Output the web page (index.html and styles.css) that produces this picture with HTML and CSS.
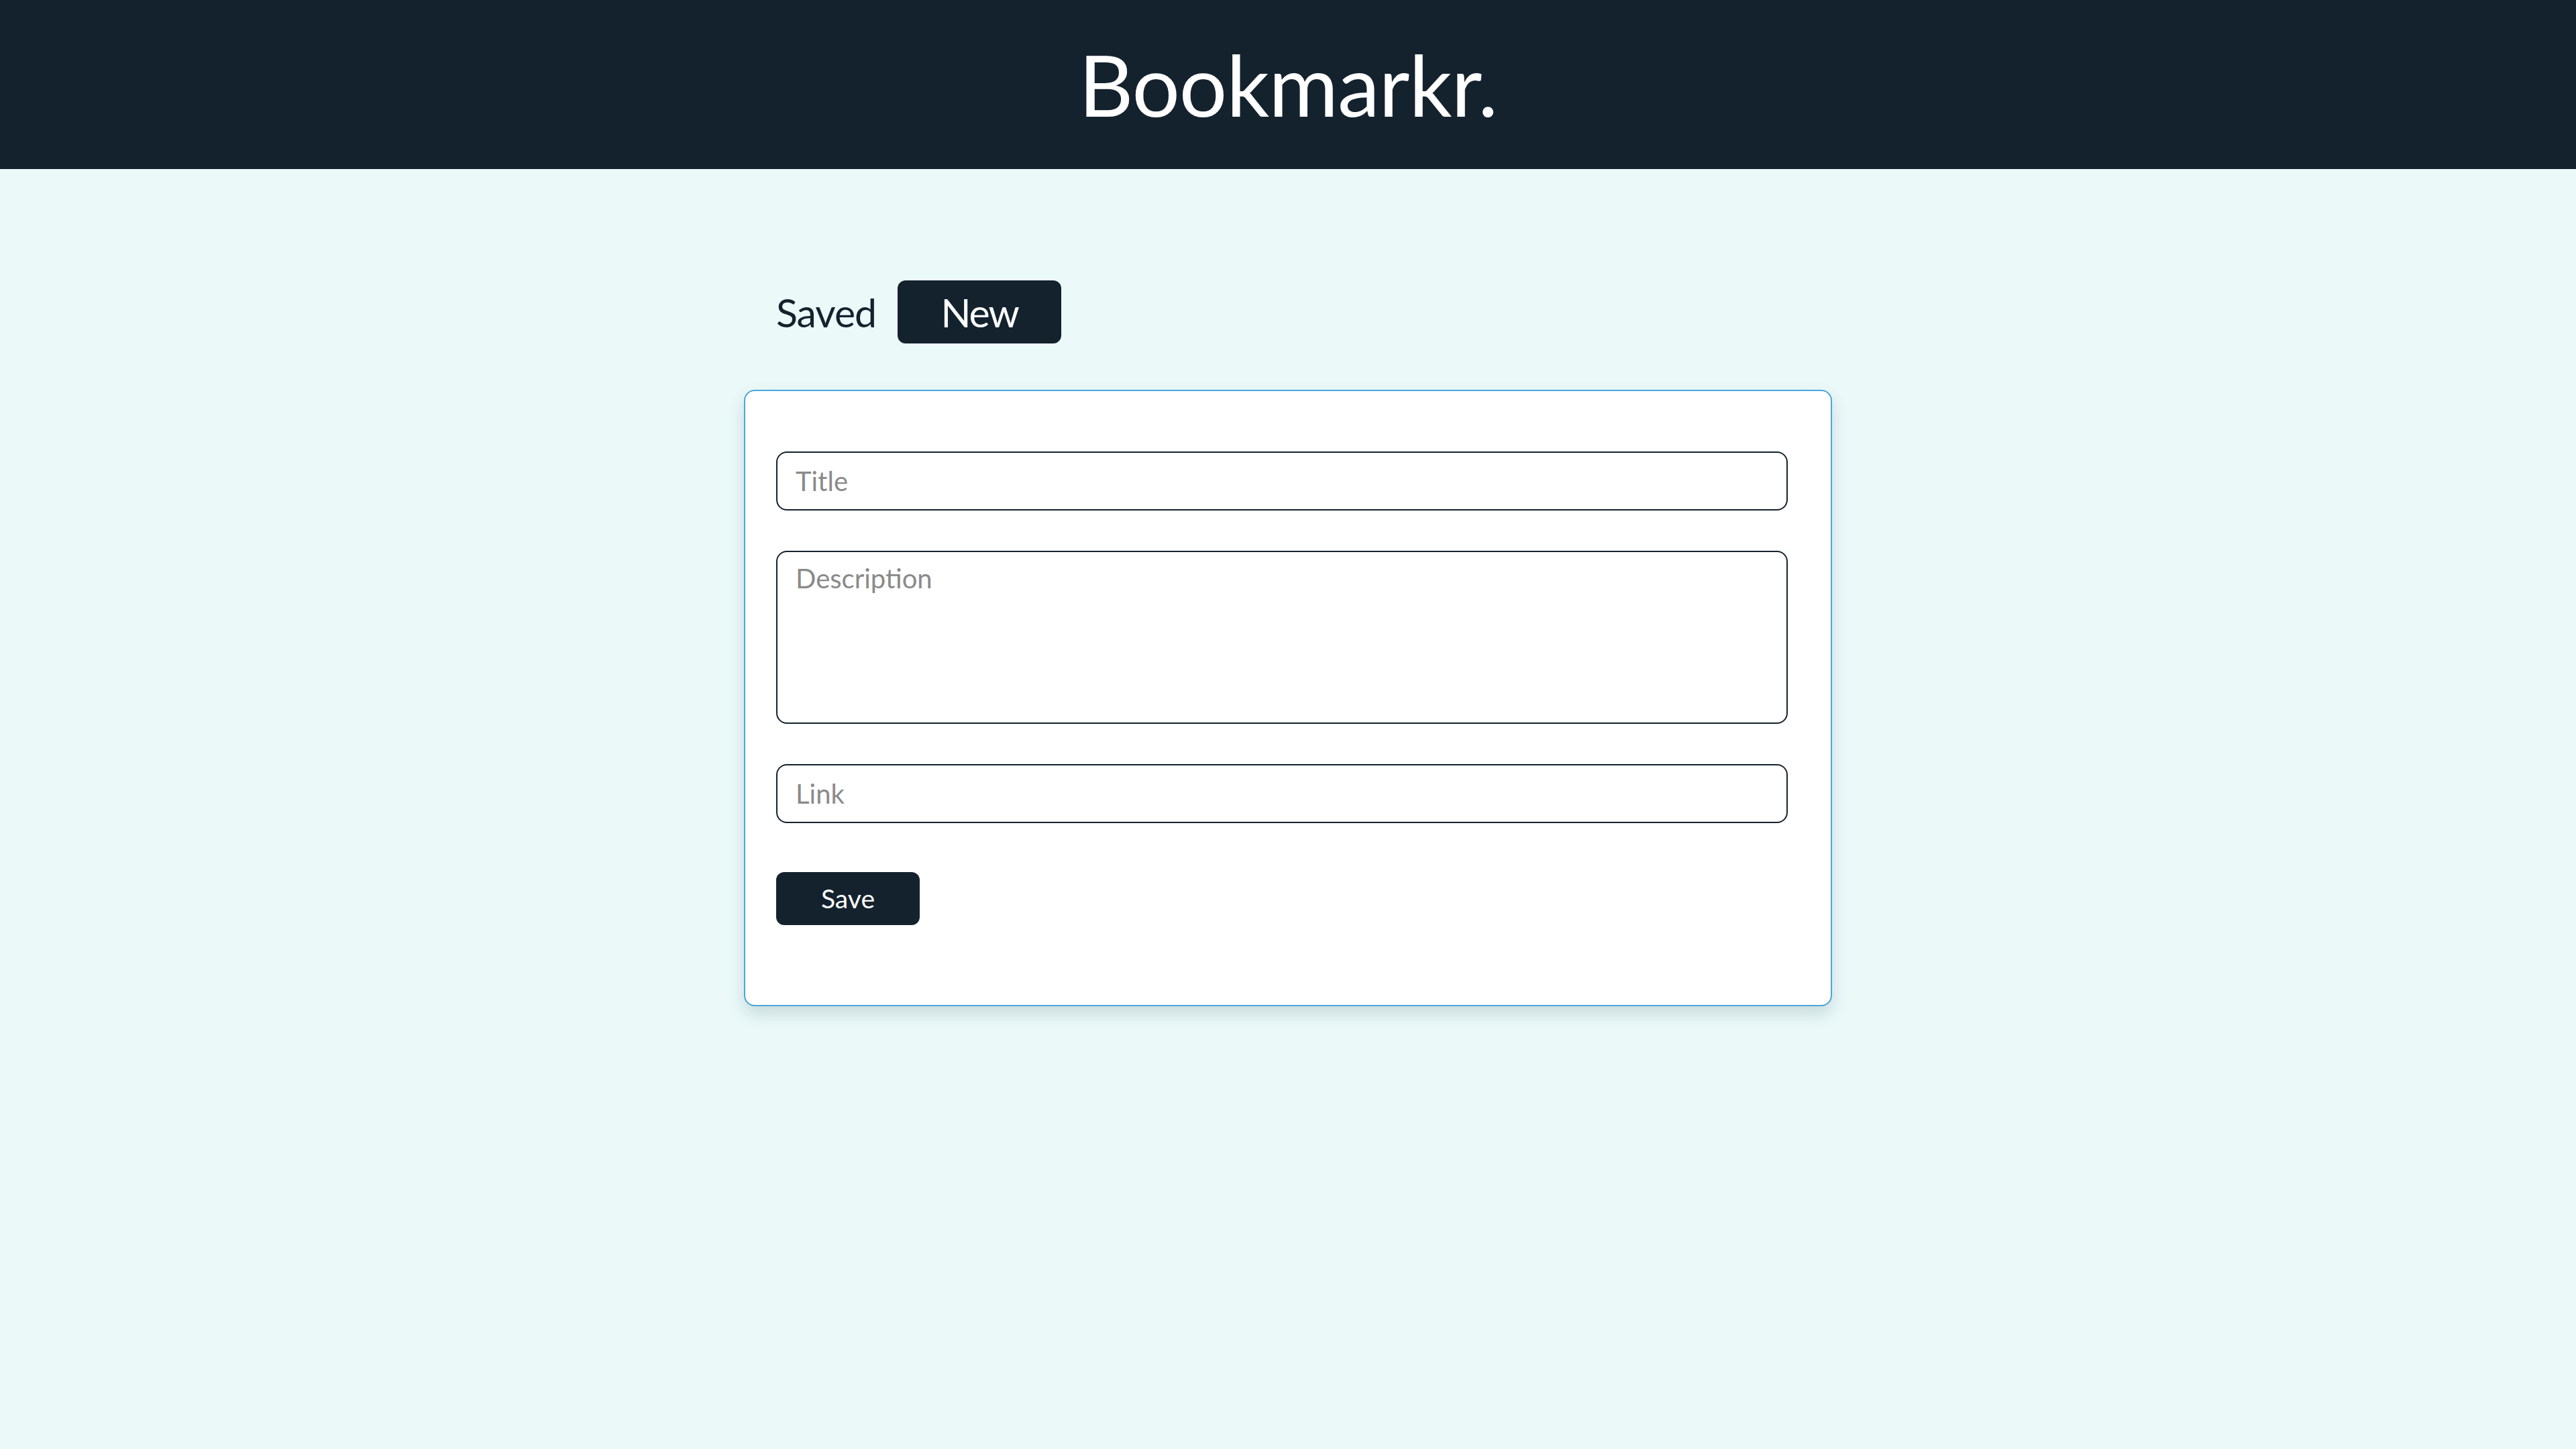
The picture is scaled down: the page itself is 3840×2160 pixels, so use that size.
FILE: index.html
```html
<!DOCTYPE html>
<html lang="en">
<head>
<meta charset="utf-8">
<title>Bookmarkr.</title>
<link rel="stylesheet" href="styles.css">
</head>
<body>
<header class="topbar">
  <h1 class="brand">Bookmarkr.</h1>
</header>
<main class="main">
  <nav class="tabs">
    <span class="tab">Saved</span>
    <button class="tab tab-active" type="button">New</button>
  </nav>
  <form class="card">
    <input class="field" type="text" placeholder="Title">
    <textarea class="field field-area" placeholder="Description"></textarea>
    <input class="field" type="text" placeholder="Link">
    <button class="save" type="button">Save</button>
  </form>
</main>
</body>
</html>
```
FILE: styles.css
```css
html, body {
  margin: 0;
  padding: 0;
}
body {
  background: #ebf9f9;
  font-family: Lato, "Open Sans", sans-serif;
  color: #14222e;
  min-height: 100vh;
}
.topbar {
  background: #14222e;
  height: 252px;
  display: flex;
  align-items: center;
  justify-content: center;
}
.brand {
  margin: 0;
  color: #ffffff;
  font-weight: 400;
  font-size: 126px;
  letter-spacing: -1px;
  line-height: 1;
}
.main {
  width: 1622px;
  margin: 166px auto 0;
}
.tabs {
  display: flex;
  align-items: center;
  gap: 32px;
  padding-left: 48px;
  height: 94px;
}
.tab {
  font-family: inherit;
  font-size: 59px;
  letter-spacing: -1px;
  color: #14222e;
  line-height: 1;
}
.tab-active {
  background: #14222e;
  color: #ffffff;
  border: none;
  border-radius: 12px;
  height: 94px;
  width: 244px;
  padding: 0;
  letter-spacing: -2px;
  cursor: pointer;
}
.card {
  margin-top: 69px;
  background: #ffffff;
  border: 2px solid #4ba6d8;
  border-radius: 16px;
  box-shadow: 0 12px 26px rgba(20, 60, 60, 0.16);
  padding: 90px 46px 119px;
  display: flex;
  flex-direction: column;
  align-items: flex-start;
  gap: 60px;
}
.field {
  box-sizing: border-box;
  width: 1508px;
  height: 88px;
  border: 2px solid #14222e;
  border-radius: 16px;
  padding: 0 27px;
  font-family: inherit;
  font-size: 40px;
  color: #14222e;
  background: #ffffff;
  outline: none;
  margin: 0;
}
.field::placeholder {
  color: #8a8a8a;
}
.field-area {
  height: 258px;
  padding: 15px 27px;
  line-height: 1.2;
  resize: none;
  display: block;
}
.save {
  margin-top: 13px;
  background: #14222e;
  color: #ffffff;
  border: none;
  border-radius: 12px;
  height: 79px;
  width: 214px;
  padding: 0;
  font-family: inherit;
  font-size: 39px;
  line-height: 1;
  cursor: pointer;
}
```
